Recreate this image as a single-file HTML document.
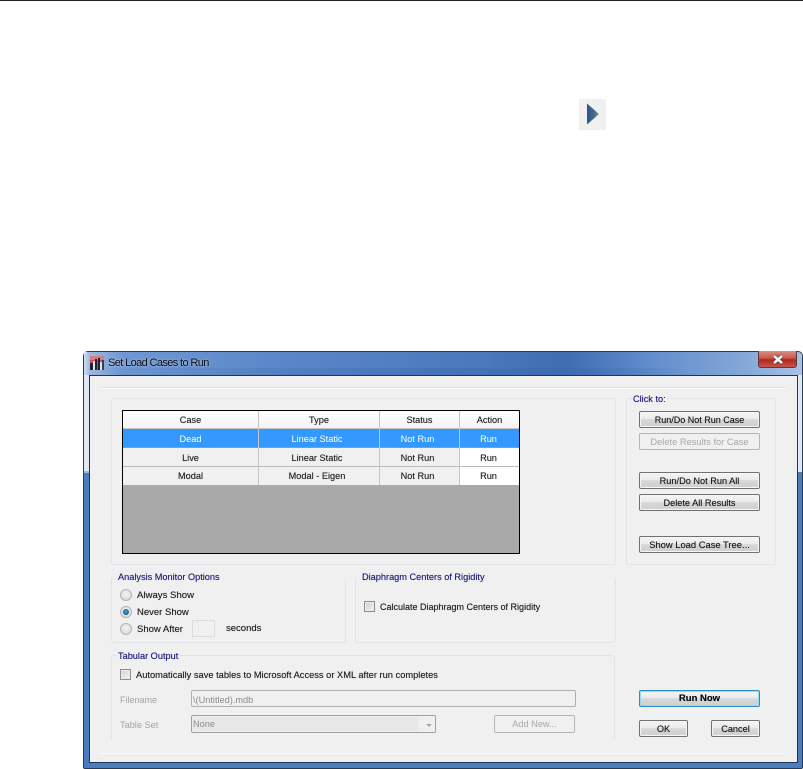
<!DOCTYPE html>
<html>
<head>
<meta charset="utf-8">
<style>
html,body{margin:0;padding:0;background:#fff;}
#p{position:relative;width:803px;height:769px;overflow:hidden;background:#fff;font-family:"Liberation Sans",sans-serif;font-size:9.2px;color:#1a1a1a;}
#p div{position:absolute;box-sizing:border-box;}
.t{white-space:nowrap;line-height:12px;height:12px;text-shadow:0 0 .6px rgba(30,30,30,.55);}
.g{border:1px solid #dde5e9;border-radius:3px;}
.l{color:#14147a;background:#f0f0f0;padding:0 1px;text-shadow:0 0 .6px rgba(20,20,120,.5);}
.b{border:1px solid #707070;border-radius:2px;background:linear-gradient(#f4f4f4 0,#ececec 45%,#d8d8d8 50%,#cfcfcf 100%);text-align:center;line-height:16px;white-space:nowrap;color:#111;box-shadow:inset 0 0 0 1px #f7f7f7;text-shadow:0 0 .6px rgba(30,30,30,.5);}
.d{border-color:#b5b5b5;color:#a8a8a8;background:#f0f0f0;box-shadow:none;text-shadow:none;}
.r{width:12px;height:12px;border-radius:50%;border:1px solid #b4b4b4;background:radial-gradient(circle at 50% 40%,#f4f4f4,#d4d4d4);}
.k{width:11px;height:11px;border:1px solid #8e8e8e;background:linear-gradient(135deg,#d0d0d0,#f5f5f5);box-shadow:inset 0 0 0 1px #ececec;}
.dim{color:#a4a4a4;text-shadow:none;}
.cell{text-align:center;line-height:18px;height:18px;white-space:nowrap;text-shadow:0 0 .6px rgba(30,30,30,.5);}
</style>
</head>
<body>
<div id="p">
<div style="left:0;top:0;width:803px;height:1px;background:#222;"></div>

<!-- toolbar icon -->
<div style="left:579px;top:99px;width:27px;height:31px;background:#f0f0f0;"></div>
<svg style="position:absolute;left:579px;top:99px;" width="27" height="31"><defs><linearGradient id="ar" x1="0" x2="1" y1="0" y2="0"><stop offset="0" stop-color="#2c5680"/><stop offset=".6" stop-color="#46698c"/><stop offset="1" stop-color="#7f97b0"/></linearGradient></defs><path d="M8 4.5 L8 25.5 L20 15 Z" fill="url(#ar)"/></svg>

<!-- window frame -->
<div style="left:83px;top:351px;width:720px;height:418px;background:#4a7cc0;border:1px solid #2a3a50;border-radius:5px 5px 2px 2px;"></div>
<div style="left:84px;top:352px;width:5px;height:119px;background:#dfe8f3;"></div>
<div style="left:84px;top:471px;width:5px;height:2px;background:#9db8dc;"></div>
<div style="left:798px;top:368px;width:4px;height:104px;background:#e0e9f4;"></div>
<div style="left:84px;top:352px;width:718px;height:23px;border-radius:4px 4px 0 0;background:linear-gradient(90deg,#cfdcef 0,#9db8e0 6px,#6f97d3 40px,#5a86c8 200px,#4a78bc 400px,#3f6db2 480px,#5f8bcb 560px,#84a7d8 660px,#a9c2e6 718px);"></div>
<div style="left:84px;top:368px;width:600px;height:7px;background:linear-gradient(90deg,rgba(60,105,175,0) 0,rgba(60,105,175,.35) 50%,rgba(60,105,175,.5) 80%,rgba(60,105,175,0) 100%);"></div>
<div style="left:758px;top:351px;width:39px;height:17px;border:1px solid #5a3a3a;border-top:0;border-radius:0 0 3px 3px;background:linear-gradient(#d68f84 0,#c9574a 45%,#b4261c 55%,#c4574c 100%);"></div>
<svg style="position:absolute;left:771px;top:354px;" width="14" height="11"><path d="M3 2 L11 9 M11 2 L3 9" stroke="#4a3535" stroke-width="4"/><path d="M3 2 L11 9 M11 2 L3 9" stroke="#f4f4f4" stroke-width="2.6"/></svg>

<!-- app icon -->
<svg style="position:absolute;left:90px;top:356px;" width="14" height="14"><rect width="14" height="14" fill="#b8535f"/><rect y="0" width="14" height="4" fill="#d77a85"/><rect x="0" y="7" width="3" height="7" fill="#1f2230"/><rect x="3" y="5" width="2" height="9" fill="#dfe4ee"/><rect x="5" y="3" width="2" height="11" fill="#1f2230"/><rect x="8" y="2" width="2" height="12" fill="#1f2230"/><rect x="10" y="6" width="2" height="8" fill="#dfe4ee"/><rect x="12" y="4" width="2" height="10" fill="#3a3f50"/></svg>
<div class="t" style="left:108px;top:356px;font-size:11px;letter-spacing:-.62px;color:#0a0a14;line-height:14px;height:14px;text-shadow:0 0 2px rgba(255,255,255,.6);">Set Load Cases to Run</div>

<!-- client area -->
<div style="left:89px;top:375px;width:709px;height:388px;background:#f0f0f0;border:1px solid #24344c;"></div>
<div style="left:99px;top:387px;width:687px;height:1px;background:#dbe3e8;"></div>
<div style="left:99px;top:388px;width:687px;height:1px;background:#fafafa;"></div>
<div style="left:99px;top:753px;width:687px;height:1px;background:#fafafa;"></div>

<!-- top group -->
<div class="g" style="left:111px;top:398px;width:505px;height:167px;"></div>
<div style="left:122px;top:410px;width:398px;height:144px;background:#a9a9a9;border:1px solid #000;"></div>
<div style="left:123px;top:411px;width:396px;height:17px;background:linear-gradient(#fff,#f3f3f3);"></div>
<div style="left:123px;top:428px;width:396px;height:1px;background:#c4c4c4;"></div>
<div style="left:123px;top:429px;width:396px;height:18px;background:#3399ff;"></div>
<div style="left:123px;top:447px;width:396px;height:1px;background:#999;"></div>
<div style="left:123px;top:448px;width:336px;height:18px;background:#f0f0f0;"></div>
<div style="left:459px;top:448px;width:60px;height:18px;background:#fff;"></div>
<div style="left:123px;top:466px;width:396px;height:1px;background:#bcbcbc;"></div>
<div style="left:123px;top:467px;width:336px;height:18px;background:#f0f0f0;"></div>
<div style="left:459px;top:467px;width:60px;height:18px;background:#fff;"></div>
<div style="left:258px;top:411px;width:1px;height:74px;background:#c4c4c4;"></div>
<div style="left:379px;top:411px;width:1px;height:74px;background:#c4c4c4;"></div>
<div style="left:459px;top:411px;width:1px;height:74px;background:#c4c4c4;"></div>

<div class="cell" style="left:123px;top:411px;width:135px;">Case</div>
<div class="cell" style="left:259px;top:411px;width:120px;">Type</div>
<div class="cell" style="left:380px;top:411px;width:79px;">Status</div>
<div class="cell" style="left:460px;top:411px;width:59px;">Action</div>
<div class="cell" style="left:123px;top:430px;width:135px;color:#fff;text-shadow:none;">Dead</div>
<div class="cell" style="left:257px;top:430px;width:120px;color:#fff;text-shadow:none;">Linear Static</div>
<div class="cell" style="left:378px;top:430px;width:79px;color:#fff;text-shadow:none;">Not Run</div>
<div class="cell" style="left:460px;top:430px;width:57px;color:#fff;text-shadow:none;">Run</div>
<div class="cell" style="left:123px;top:449px;width:135px;">Live</div>
<div class="cell" style="left:257px;top:449px;width:120px;">Linear Static</div>
<div class="cell" style="left:378px;top:449px;width:79px;">Not Run</div>
<div class="cell" style="left:460px;top:449px;width:57px;">Run</div>
<div class="cell" style="left:123px;top:467px;width:135px;">Modal</div>
<div class="cell" style="left:257px;top:467px;width:120px;">Modal - Eigen</div>
<div class="cell" style="left:378px;top:467px;width:79px;">Not Run</div>
<div class="cell" style="left:460px;top:467px;width:57px;">Run</div>

<!-- click to -->
<div class="g" style="left:626px;top:398px;width:150px;height:167px;"></div>
<div class="t l" style="left:632px;top:393px;">Click to:</div>
<div class="b" style="left:639px;top:411px;width:121px;height:17px;font-size:9px;">Run/Do Not Run Case</div>
<div class="b d" style="left:639px;top:433px;width:121px;height:17px;font-size:9.3px;">Delete Results for Case</div>
<div class="b" style="left:639px;top:472px;width:121px;height:17px;">Run/Do Not Run All</div>
<div class="b" style="left:639px;top:494px;width:121px;height:17px;">Delete All Results</div>
<div class="b" style="left:639px;top:536px;width:121px;height:17px;font-size:9.4px;">Show Load Case Tree...</div>

<!-- analysis monitor -->
<div class="g" style="left:111px;top:577px;width:235px;height:66px;border-top-color:#f0f0f0;"></div>
<div class="t l" style="left:117px;top:571px;">Analysis Monitor Options</div>
<div class="r" style="left:120px;top:589px;"></div>
<div class="t" style="left:137px;top:590px;font-size:9.6px;">Always Show</div>
<div class="r" style="left:120px;top:606px;"></div>
<div style="left:123px;top:609px;width:6px;height:6px;border-radius:50%;background:radial-gradient(circle at 50% 40%,#4aa3d8,#0d3f66);"></div>
<div class="t" style="left:137px;top:607px;font-size:9.5px;">Never Show</div>
<div class="r" style="left:120px;top:623px;"></div>
<div class="t" style="left:137px;top:624px;font-size:9.5px;">Show After</div>
<div style="left:192px;top:620px;width:23px;height:17px;border:1px solid #dcdcdc;background:#f0f0f0;"></div>
<div class="t" style="left:226px;top:623px;font-size:9.5px;">seconds</div>

<!-- diaphragm -->
<div class="g" style="left:355px;top:577px;width:261px;height:66px;border-top-color:#eef1f2;"></div>
<div class="t l" style="left:361px;top:571px;">Diaphragm Centers of Rigidity</div>
<div class="k" style="left:364px;top:601px;"></div>
<div class="t" style="left:380px;top:601px;font-size:9px;">Calculate Diaphragm Centers of Rigidity</div>

<!-- tabular -->
<div class="g" style="left:111px;top:655px;width:504px;height:87px;border-bottom-color:#f0f0f0;"></div>
<div class="t l" style="left:117px;top:650px;">Tabular Output</div>
<div class="k" style="left:120px;top:669px;"></div>
<div class="t" style="left:136px;top:669px;font-size:9.3px;">Automatically save tables to Microsoft Access or XML after run completes</div>
<div class="t dim" style="left:120px;top:694px;font-size:9px;">Filename</div>
<div style="left:191px;top:690px;width:385px;height:17px;border:1px solid #b0b0b0;border-radius:2px;background:#f0f0f0;"></div>
<div class="t dim" style="left:193px;top:694px;color:#8c8c8c;">\(Untitled).mdb</div>
<div class="t dim" style="left:120px;top:719px;">Table Set</div>
<div style="left:191px;top:715px;width:245px;height:18px;border:1px solid #a0a0a0;border-radius:2px;background:#f0f0f0;"></div>
<div style="left:193px;top:717px;width:226px;height:14px;background:#e8e8e8;"></div>
<div class="t dim" style="left:193px;top:718px;color:#8c8c8c;">None</div>
<div style="left:426px;top:724px;width:0;height:0;border:3px solid transparent;border-top:3px solid #a8a8a8;"></div>
<div class="b d" style="left:494px;top:715px;width:81px;height:18px;line-height:17px;">Add New...</div>

<!-- bottom buttons -->
<div class="b" style="left:639px;top:690px;width:121px;height:17px;border-color:#2a8fc8;box-shadow:inset 0 0 0 1px #8fdcf5;font-weight:bold;color:#000;font-size:9.5px;">Run Now</div>
<div class="b" style="left:639px;top:720px;width:49px;height:17px;">OK</div>
<div class="b" style="left:711px;top:720px;width:49px;height:17px;">Cancel</div>
</div>
</body>
</html>
